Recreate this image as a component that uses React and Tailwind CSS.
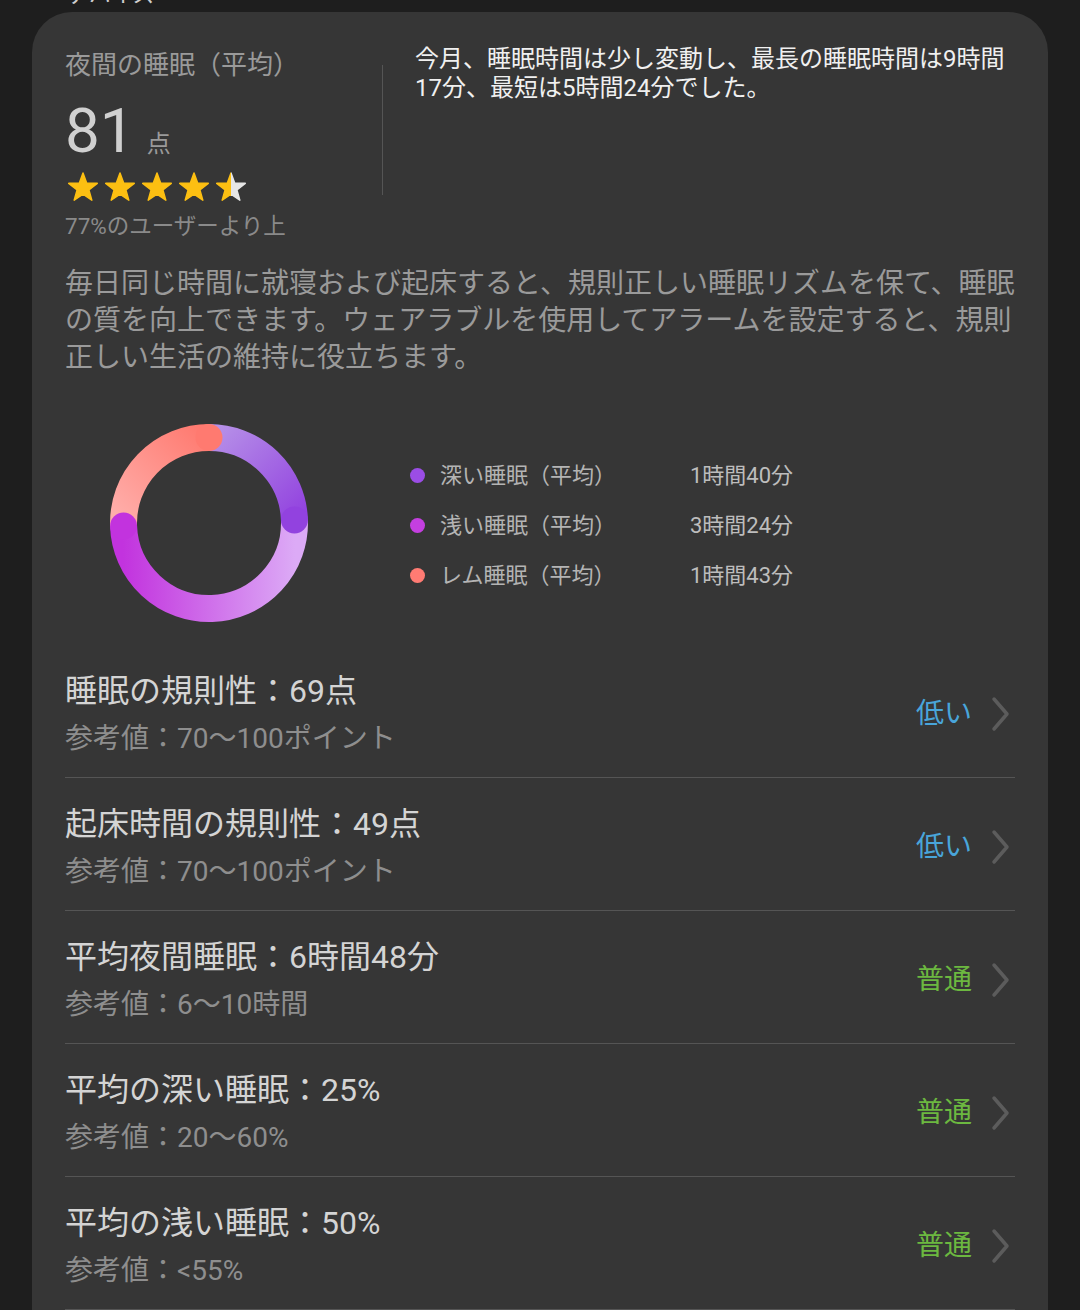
import React from "react";

const STAR = "15,1 18.64,10.98 29.27,11.36 20.9,17.92 23.82,28.14 15,22.2 6.18,28.14 9.1,17.92 0.73,11.36 11.36,10.98";

function Star({ half, id }) {
  return (
    <svg width="30" height="30" viewBox="0 0 30 30">
      {half && (
        <defs>
          <linearGradient id={id} x1="0" y1="0" x2="1" y2="0">
            <stop offset="0.5" stopColor="#fcbf12" />
            <stop offset="0.5" stopColor="#e6e6e6" />
          </linearGradient>
        </defs>
      )}
      <polygon
        points={STAR}
        fill={half ? `url(#${id})` : "#fcbf12"}
        stroke={half ? `url(#${id})` : "#fcbf12"}
        strokeWidth="1.5"
        strokeLinejoin="round"
      />
    </svg>
  );
}

function Donut() {
  return (
    <svg width="200" height="200" viewBox="0 0 200 200">
      <defs>
        <linearGradient id="gDeep" gradientUnits="userSpaceOnUse" x1="100" y1="14" x2="186" y2="100">
          <stop offset="0" stopColor="#b690e8" />
          <stop offset="1" stopColor="#9242df" />
        </linearGradient>
        <linearGradient id="gLight" gradientUnits="userSpaceOnUse" x1="186" y1="100" x2="14" y2="100">
          <stop offset="0" stopColor="#dcaaf6" />
          <stop offset="1" stopColor="#c233de" />
        </linearGradient>
        <linearGradient id="gRem" gradientUnits="userSpaceOnUse" x1="14" y1="100" x2="100" y2="14">
          <stop offset="0" stopColor="#ffaeaa" />
          <stop offset="1" stopColor="#ff7a70" />
        </linearGradient>
      </defs>
      <path d="M100 14.5 A85.5 85.5 0 0 1 185.45 97.02" fill="none" stroke="url(#gDeep)" strokeWidth="27" />
      <path d="M185.45 97.02 A85.5 85.5 0 0 1 102.98 185.45 A85.5 85.5 0 0 1 14.55 102.98" fill="none" stroke="url(#gLight)" strokeWidth="27" />
      <path d="M14.55 102.98 A85.5 85.5 0 0 1 100 14.5" fill="none" stroke="url(#gRem)" strokeWidth="27" />
      <circle cx="185.45" cy="97.02" r="13.5" fill="#9242df" />
      <circle cx="14.55" cy="102.98" r="13.5" fill="#c233de" />
      <circle cx="100" cy="14.5" r="13.5" fill="#ff7a70" />
    </svg>
  );
}

function Chevron() {
  return (
    <svg width="20" height="36" viewBox="0 0 20 36" className="mr-[4px]">
      <path d="M3 3 L16 18 L3 33" fill="none" stroke="#5c5c5c" strokeWidth="3.5" strokeLinecap="round" strokeLinejoin="round" />
    </svg>
  );
}

const rows = [
  { t: "睡眠の規則性：69点", s: "参考値：70〜100ポイント", r: "低い", blue: true },
  { t: "起床時間の規則性：49点", s: "参考値：70〜100ポイント", r: "低い", blue: true },
  { t: "平均夜間睡眠：6時間48分", s: "参考値：6〜10時間", r: "普通", blue: false },
  { t: "平均の深い睡眠：25%", s: "参考値：20〜60%", r: "普通", blue: false },
  { t: "平均の浅い睡眠：50%", s: "参考値：<55%", r: "普通", blue: false },
];

const legend = [
  { c: "bg-[#9b4de6]", l: "深い睡眠（平均）", v: "1時間40分" },
  { c: "bg-[#c43fe0]", l: "浅い睡眠（平均）", v: "3時間24分" },
  { c: "bg-[#ff7b73]", l: "レム睡眠（平均）", v: "1時間43分" },
];

export default function App() {
  return (
    <div className="w-[1080px] h-[1310px] overflow-hidden bg-[#1e1e1e] [font-family:Roboto,'Noto_Sans_CJK_JP',sans-serif]">
      <div className="-mt-[19px] ml-[67px] text-[22px] leading-[28px] text-[#cfcfcf]">デバイス</div>
      <div className="mt-[3px] ml-[32px] w-[1016px] rounded-t-[40px] bg-[#363636] px-[33px] pt-[32px] pb-[40px]">
        <div className="flex">
          <div className="w-[317px] pt-[5px]">
            <div className="text-[26px] leading-[32px] text-[#9a9a9a]">夜間の睡眠（平均）</div>
            <div className="mt-[19px] h-[62px] text-[62px] leading-[62px] text-[#d0d0d0] whitespace-nowrap">
              81<span className="ml-[12px] text-[24px] leading-none text-[#9a9a9a]">点</span>
            </div>
            <div className="mt-[10px] ml-[3px] flex gap-[7px]">
              <Star />
              <Star />
              <Star />
              <Star />
              <Star half id="halfStar" />
            </div>
            <div className="mt-[11px] text-[22.5px] leading-[26px] text-[#8a8a8a]">77%のユーザーより上</div>
          </div>
          <div className="mt-[21px] h-[130px] w-px bg-[#555555]"></div>
          <div className="pl-[32px] pt-[1px] text-[24px] leading-[29px] text-[#f0f0f0] whitespace-nowrap">
            今月、睡眠時間は少し変動し、最長の睡眠時間は9時間
            <br />
            17分、最短は5時間24分でした。
          </div>
        </div>

        <div className="mt-[26px] text-[28px] leading-[37px] text-[#9a9a9a] whitespace-nowrap">
          毎日同じ時間に就寝および起床すると、規則正しい睡眠リズムを保て、睡眠
          <br />
          の質を向上できます。ウェアラブルを使用してアラームを設定すると、規則
          <br />
          正しい生活の維持に役立ちます。
        </div>

        <div className="mt-[47px] flex items-center">
          <div className="ml-[44px]">
            <Donut />
          </div>
          <div className="ml-[101px] pt-[5px] flex flex-col">
            {legend.map((x) => (
              <div key={x.l} className="flex h-[50px] items-center">
                <div className={`h-[15px] w-[15px] rounded-full ${x.c}`}></div>
                <div className="ml-[15px] w-[250px] text-[22px] leading-[30px] text-[#b4b4b4]">{x.l}</div>
                <div className="text-[22px] leading-[30px] text-[#bdbdbd]">{x.v}</div>
              </div>
            ))}
          </div>
        </div>

        <div className="mt-[22px] flex flex-col">
          {rows.map((r) => (
            <div key={r.t} className="flex items-center border-b border-[#555555] pt-[26px] pb-[21px]">
              <div className="flex flex-col">
                <div className="text-[32px] leading-[40px] text-[#d4d4d4] whitespace-nowrap">{r.t}</div>
                <div className="mt-[11px] text-[28px] leading-[34px] text-[#8e8e8e] whitespace-nowrap">{r.s}</div>
              </div>
              <div className={`ml-auto mr-[19px] text-[28px] leading-[34px] ${r.blue ? "text-[#49a5da]" : "text-[#6cb840]"}`}>
                {r.r}
              </div>
              <Chevron />
            </div>
          ))}
        </div>
      </div>
    </div>
  );
}
